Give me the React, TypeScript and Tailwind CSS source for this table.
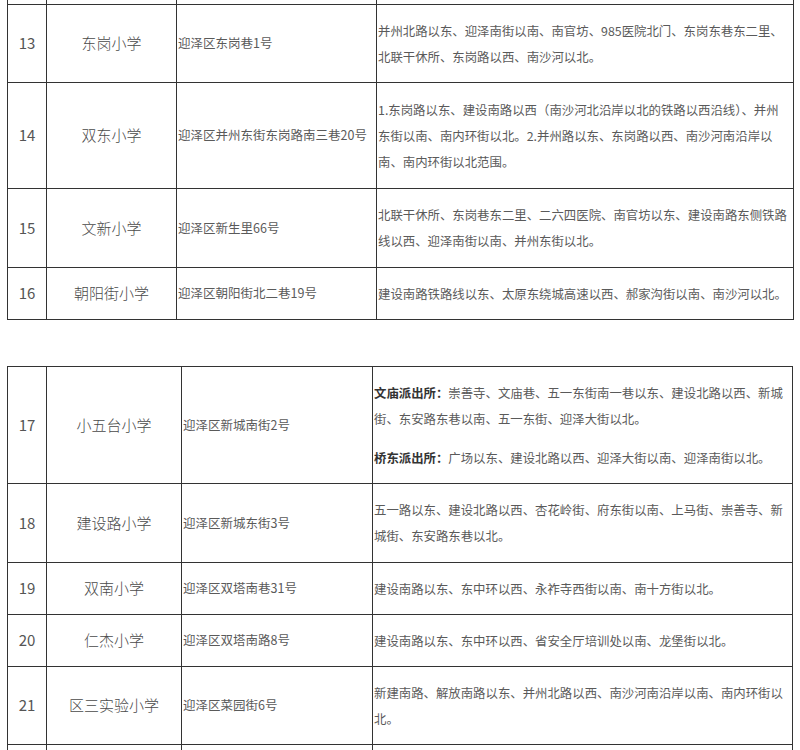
import type { ReactNode } from 'react';

type Para = { label?: string; lines: string[] };

type Row = {
  no: string;
  name: string;
  addr: string;
  h: string;
  paras: Para[];
};

const FIRST: Row[] = [
  {
    no: '13',
    name: '东岗小学',
    addr: '迎泽区东岗巷1号',
    h: 'h-[78px]',
    paras: [
      {
        lines: [
          '并州北路以东、迎泽南街以南、南官坊、985医院北门、东岗东巷东二里、',
          '北联干休所、东岗路以西、南沙河以北。',
        ],
      },
    ],
  },
  {
    no: '14',
    name: '双东小学',
    addr: '迎泽区并州东街东岗路南三巷20号',
    h: 'h-[106px]',
    paras: [
      {
        lines: [
          '1.东岗路以东、建设南路以西（南沙河北沿岸以北的铁路以西沿线）、并州',
          '东街以南、南内环街以北。2.并州路以东、东岗路以西、南沙河南沿岸以',
          '南、南内环街以北范围。',
        ],
      },
    ],
  },
  {
    no: '15',
    name: '文新小学',
    addr: '迎泽区新生里66号',
    h: 'h-[79px]',
    paras: [
      {
        lines: [
          '北联干休所、东岗巷东二里、二六四医院、南官坊以东、建设南路东侧铁路',
          '线以西、迎泽南街以南、并州东街以北。',
        ],
      },
    ],
  },
  {
    no: '16',
    name: '朝阳街小学',
    addr: '迎泽区朝阳街北二巷19号',
    h: 'h-[52px]',
    paras: [
      {
        lines: ['建设南路铁路线以东、太原东绕城高速以西、郝家沟街以南、南沙河以北。'],
      },
    ],
  },
];

const SECOND: Row[] = [
  {
    no: '17',
    name: '小五台小学',
    addr: '迎泽区新城南街2号',
    h: 'h-[117px]',
    paras: [
      {
        label: '文庙派出所：',
        lines: [
          '崇善寺、文庙巷、五一东街南一巷以东、建设北路以西、新城',
          '街、东安路东巷以南、五一东街、迎泽大街以北。',
        ],
      },
      {
        label: '桥东派出所：',
        lines: ['广场以东、建设北路以西、迎泽大街以南、迎泽南街以北。'],
      },
    ],
  },
  {
    no: '18',
    name: '建设路小学',
    addr: '迎泽区新城东街3号',
    h: 'h-[79px]',
    paras: [
      {
        lines: [
          '五一路以东、建设北路以西、杏花岭街、府东街以南、上马街、崇善寺、新',
          '城街、东安路东巷以北。',
        ],
      },
    ],
  },
  {
    no: '19',
    name: '双南小学',
    addr: '迎泽区双塔南巷31号',
    h: 'h-[52px]',
    paras: [{ lines: ['建设南路以东、东中环以西、永祚寺西街以南、南十方街以北。'] }],
  },
  {
    no: '20',
    name: '仁杰小学',
    addr: '迎泽区双塔南路8号',
    h: 'h-[52px]',
    paras: [{ lines: ['建设南路以东、东中环以西、省安全厅培训处以南、龙堡街以北。'] }],
  },
  {
    no: '21',
    name: '区三实验小学',
    addr: '迎泽区菜园街6号',
    h: 'h-[78px]',
    paras: [
      {
        lines: [
          '新建南路、解放南路以东、并州北路以西、南沙河南沿岸以南、南内环街以',
          '北。',
        ],
      },
    ],
  },
  { no: '', name: '', addr: '', h: 'h-[80px]', paras: [] },
];

const cell = 'border-r border-b border-[#333]';

function Area({ paras }: { paras: Para[] }) {
  return (
    <div className="flex flex-col gap-[13px]">
      {paras.map((p, i) => (
        <div key={i} className="leading-[26px]">
          {p.lines.map((line, j) => {
            let content: ReactNode = line;
            if (j === 0 && p.label) {
              content = (
                <>
                  <span className="font-bold text-[#333]">{p.label}</span>
                  {line}
                </>
              );
            }
            return (
              <div key={j} className="whitespace-nowrap">
                {content}
              </div>
            );
          })}
        </div>
      ))}
    </div>
  );
}

function TableRows({ rows, cols }: { rows: Row[]; cols: string }) {
  return (
    <>
      {rows.map(r => (
        <div key={r.no + r.name} className={`grid ${cols} ${r.h}`}>
          <div className={`${cell} flex items-center justify-center text-[15px] text-[#555]`}>
            {r.no}
          </div>
          <div className={`${cell} flex items-center justify-center text-[15px] font-light text-[#4a4a4a]`}>
            {r.name}
          </div>
          <div className={`${cell} flex items-center pl-[1px] text-[12.5px] text-[#5a5a5a]`}>
            {r.addr}
          </div>
          <div className={`${cell} flex items-center pl-[1px] text-[12.4px] text-[#5a5a5a]`}>
            <Area paras={r.paras} />
          </div>
        </div>
      ))}
    </>
  );
}

export default function App() {
  const colsA = 'grid-cols-[39px_130px_200px_417px]';
  const colsB = 'grid-cols-[39px_135px_191px_420px]';
  return (
    <div
      className="h-[750px] overflow-hidden bg-white"
      style={{ fontFamily: '"Noto Sans CJK SC", "Noto Sans", sans-serif' }}
    >
      {/* first table, continued from above */}
      <div className="ml-[7px] w-[787px] border-l border-[#333]">
        <div className={`grid ${colsA} h-[5px]`}>
          <div className={cell} />
          <div className={cell} />
          <div className={cell} />
          <div className={cell} />
        </div>
        <TableRows rows={FIRST} cols={colsA} />
      </div>

      {/* second table */}
      <div className="mt-[46px] ml-[7px] w-[786px] border-l border-t border-[#333]">
        <TableRows rows={SECOND} cols={colsB} />
      </div>
    </div>
  );
}
